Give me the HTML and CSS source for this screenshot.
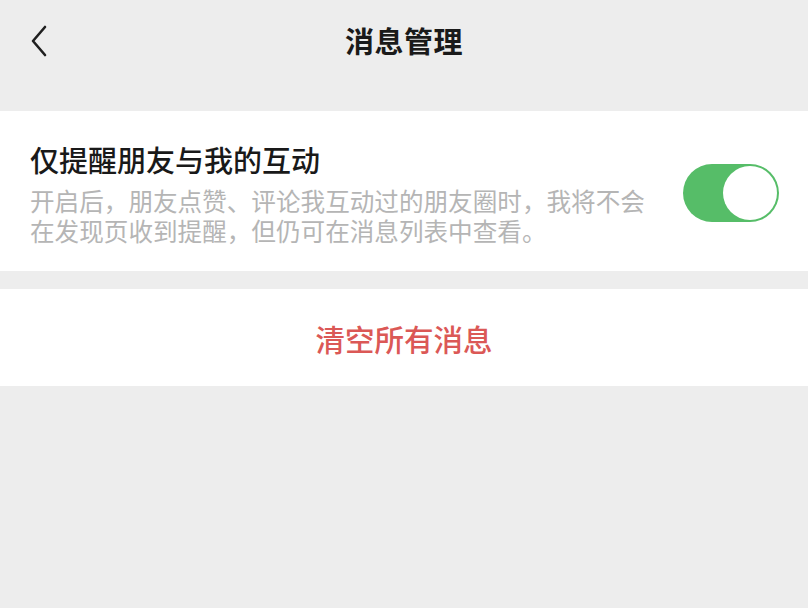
FILE: index.html
```html
<!DOCTYPE html>
<html lang="zh-CN">
<head>
<meta charset="utf-8">
<link rel="stylesheet" href="styles.css">
</head>
<body>
<div class="page">
  <header class="nav">
    <span class="back">
      <svg width="20" height="34" viewBox="0 0 20 34"><path d="M15 3 L3 17 L15 31" fill="none" stroke="#1f1f1f" stroke-width="2.6" stroke-linecap="round" stroke-linejoin="round"/></svg>
    </span>
    <h1 class="title">消息管理</h1>
  </header>
  <section class="card setting">
    <div class="text">
      <div class="label">仅提醒朋友与我的互动</div>
      <div class="desc">开启后，朋友点赞、评论我互动过的朋友圈时，我将不会在发现页收到提醒，但仍可在消息列表中查看。</div>
    </div>
    <div class="switch on"><span class="knob"></span></div>
  </section>
  <section class="card action">
    <span class="danger">清空所有消息</span>
  </section>
</div>
</body>
</html>
```
FILE: styles.css
```css
html, body {
  margin: 0;
  padding: 0;
  background: #ededed;
}
body {
  font-family: "Noto Sans CJK SC", "Noto Sans", sans-serif;
  width: 808px;
  height: 608px;
  overflow: hidden;
}
.page {
  display: flex;
  flex-direction: column;
}
.nav {
  position: relative;
  height: 81px;
  display: flex;
  align-items: center;
  justify-content: center;
  margin-bottom: 30px;
}
.back {
  position: absolute;
  left: 30px;
  top: 24px;
  display: flex;
}
.title {
  margin: 0;
  font-size: 29px;
  font-weight: 700;
  color: #1a1a1a;
  line-height: 1;
  letter-spacing: 0.5px;
}
.card {
  background: #ffffff;
}
.setting {
  display: flex;
  align-items: center;
  justify-content: space-between;
  padding: 30px 29px 26px 30px;
}
.text {
  width: 625px;
}
.label {
  font-size: 29px;
  font-weight: 500;
  line-height: 36px;
  color: #191919;
}
.desc {
  margin-top: 8px;
  font-size: 24.6px;
  line-height: 30px;
  color: #b5b5b5;
}
.switch {
  width: 96px;
  height: 58px;
  border-radius: 29px;
  background: #56bd68;
  display: flex;
  align-items: center;
  justify-content: flex-end;
  padding: 2px;
  box-sizing: border-box;
}
.knob {
  width: 54px;
  height: 54px;
  border-radius: 50%;
  background: #ffffff;
  box-sizing: border-box;
}
.action {
  margin-top: 18px;
  height: 97px;
  display: flex;
  align-items: center;
  justify-content: center;
}
.danger {
  font-size: 29.5px;
  font-weight: 500;
  color: #db5856;
}
```
